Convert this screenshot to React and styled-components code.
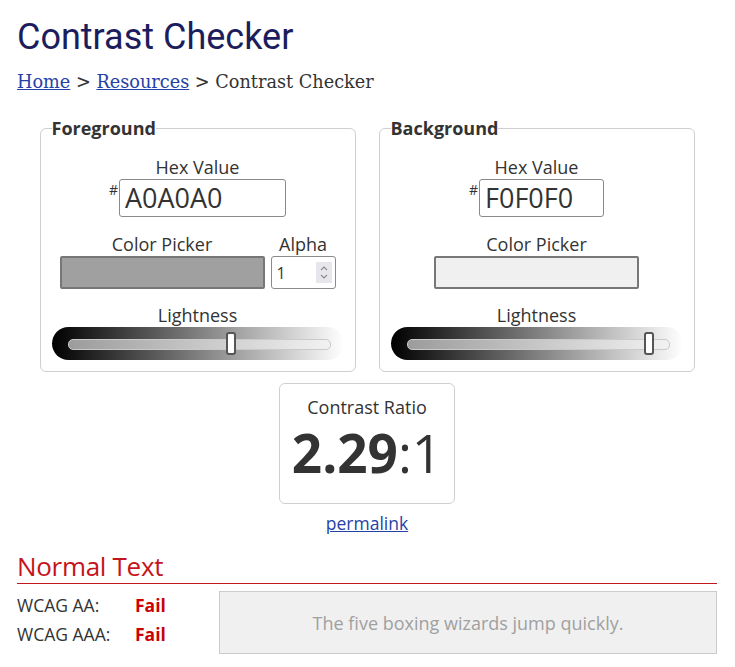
import React from "react";
import styled, { createGlobalStyle } from "styled-components";

const GlobalStyle = createGlobalStyle`
  body {
    margin: 0;
    background: #fff;
    color: #333;
    font-family: "Open Sans", "DejaVu Sans", sans-serif;
  }
`;

const Page = styled.div`
  width: 700px;
  padding: 0 18px 0 17px;
`;

const Title = styled.h1`
  margin: 16px 0 0;
  font-family: Roboto, "Liberation Sans", sans-serif;
  font-weight: 400;
  font-size: 36px;
  line-height: 42px;
  color: #1c1d5c;
`;

const Breadcrumb = styled.nav`
  margin-top: 12px;
  font-family: "DejaVu Serif", "Liberation Serif", serif;
  font-size: 17.7px;
  line-height: 24px;
  color: #333;

  a {
    color: #2541a8;
    text-decoration: underline;
  }
`;

const Panels = styled.div`
  display: flex;
  justify-content: center;
  gap: 23px;
  margin-top: 22px;
`;

const ColorFieldset = styled.fieldset`
  box-sizing: border-box;
  width: 316px;
  margin: 0;
  padding: 15px 11px 11px;
  border: 1px solid #cfcfcf;
  border-radius: 6px;
  display: flex;
  flex-direction: column;
  align-items: center;
  min-width: 0;
`;

const Legend = styled.legend`
  padding: 0;
  font-size: 18px;
  font-weight: 700;
  line-height: 24px;
  color: #333;
`;

const FieldLabel = styled.div`
  font-size: 18px;
  line-height: 24px;
  color: #333;
  text-align: center;
  margin-top: ${(p) => p.$top || 0}px;
`;

const HexRow = styled.div`
  display: flex;
  align-items: flex-start;
`;

const Hash = styled.span`
  font-size: 14px;
  line-height: 14px;
  margin-top: 4px;
  margin-right: 1px;
`;

const HexInput = styled.div`
  box-sizing: border-box;
  width: ${(p) => p.$width}px;
  height: 38px;
  border: 1px solid #8a8a8a;
  border-radius: 3px;
  padding: 0 5px;
  font-size: 27px;
  line-height: 36px;
  color: #333;
`;

const PickerRow = styled.div`
  display: flex;
  gap: 6px;
  align-items: flex-end;
  margin-top: 15px;
`;

const PickerCol = styled.div`
  display: flex;
  flex-direction: column;
  align-items: center;
`;

const Swatch = styled.div`
  box-sizing: border-box;
  width: 205px;
  height: 33px;
  background: ${(p) => p.$color};
  border: 2px solid #777;
  border-radius: 2px;
`;

const AlphaBox = styled.div`
  box-sizing: border-box;
  width: 65px;
  height: 33px;
  border: 1px solid #8a8a8a;
  border-radius: 3px;
  display: flex;
  align-items: center;
  justify-content: space-between;
  padding: 0 3px 0 5px;
  font-size: 16px;
`;

const Spinner = styled.span`
  width: 16px;
  height: 21px;
  background: #e6e6ec;
  display: flex;
  align-items: center;
  justify-content: center;
`;

const Slider = styled.div`
  box-sizing: border-box;
  width: 292px;
  height: 33px;
  padding: 0 13px 0 16px;
  display: flex;
  align-items: center;
  border-radius: 17px;
  background: linear-gradient(to right, #000 0%, #fff 100%);
`;

const Track = styled.div`
  position: relative;
  flex: 1;
  height: 9px;
  margin-top: 2px;
  border: 1px solid #c9c9c9;
  border-radius: 5px;
  background: linear-gradient(to right, #9c9c9c, #f2f2f2);
`;

const Thumb = styled.div`
  position: absolute;
  top: -8px;
  box-sizing: border-box;
  width: 10px;
  height: 23px;
  background: #fff;
  border: 2px solid #555;
  border-radius: 3px;
`;

const RatioBox = styled.div`
  box-sizing: border-box;
  width: 176px;
  height: 121px;
  margin: 11px auto 0;
  border: 1px solid #cfcfcf;
  border-radius: 6px;
  display: flex;
  flex-direction: column;
  align-items: center;
  padding-top: 11px;
`;

const RatioLabel = styled.div`
  font-size: 18px;
  line-height: 24px;
`;

const RatioValue = styled.div`
  font-size: 53px;
  line-height: 62px;
  margin-top: 3px;
  color: #333;

  b {
    font-weight: 700;
  }
`;

const Permalink = styled.a`
  display: block;
  width: max-content;
  margin: 7px auto 0;
  font-size: 17.5px;
  line-height: 24px;
  color: #2541a8;
  text-decoration: underline;
`;

const SectionHeading = styled.h2`
  margin: 15px 0 0;
  padding-bottom: 1px;
  border-bottom: 1px solid #c4141c;
  font-size: 26px;
  font-weight: 400;
  line-height: 32px;
  color: #c4141c;
  letter-spacing: -0.3px;
`;

const ResultRow = styled.div`
  display: flex;
  margin-top: 7px;
`;

const Results = styled.div`
  width: 202px;
`;

const ResultLine = styled.div`
  display: flex;
  font-size: 17.5px;
  line-height: 29px;
`;

const Level = styled.span`
  width: 118px;
`;

const Verdict = styled.span`
  font-weight: 700;
  color: #cc0000;
`;

const Sample = styled.div`
  box-sizing: border-box;
  flex: 1;
  height: 63px;
  background: ${(p) => p.$bg};
  color: ${(p) => p.$fg};
  border: 1px solid #ccc;
  display: flex;
  align-items: center;
  justify-content: center;
  font-size: 18px;
`;

const panels = [
  { name: "Foreground", hex: "A0A0A0", inputWidth: 167, alpha: true },
  { name: "Background", hex: "F0F0F0", inputWidth: 125, alpha: false },
];

function lightness(hex) {
  const v = [0, 2, 4].map((i) => parseInt(hex.slice(i, i + 2), 16) / 255);
  return (Math.max(...v) + Math.min(...v)) / 2;
}

function ColorPanel({ panel }) {
  const l = lightness(panel.hex);
  return (
    <ColorFieldset>
      <Legend>{panel.name}</Legend>
      <FieldLabel>Hex Value</FieldLabel>
      <HexRow>
        <Hash>#</Hash>
        <HexInput $width={panel.inputWidth}>{panel.hex}</HexInput>
      </HexRow>
      <PickerRow>
        <PickerCol>
          <FieldLabel>Color Picker</FieldLabel>
          <Swatch $color={"#" + panel.hex} />
        </PickerCol>
        {panel.alpha && (
          <PickerCol>
            <FieldLabel>Alpha</FieldLabel>
            <AlphaBox>
              1
              <Spinner>
                <svg width="10" height="17" viewBox="0 0 10 17" fill="none" stroke="#8a8a8a" strokeWidth="1.1">
                  <path d="M2 6 L5 3 L8 6" />
                  <path d="M2 11 L5 14 L8 11" />
                </svg>
              </Spinner>
            </AlphaBox>
          </PickerCol>
        )}
      </PickerRow>
      <FieldLabel $top={14}>Lightness</FieldLabel>
      <Slider>
        <Track>
          <Thumb style={{ left: `calc(${l} * (100% - 10px))` }} />
        </Track>
      </Slider>
    </ColorFieldset>
  );
}

export default function App() {
  return (
    <>
      <GlobalStyle />
      <Page>
        <Title>Contrast Checker</Title>
        <Breadcrumb>
          <a href="#">Home</a> &gt; <a href="#">Resources</a> &gt; Contrast Checker
        </Breadcrumb>
        <Panels>
          {panels.map((p) => (
            <ColorPanel key={p.name} panel={p} />
          ))}
        </Panels>
        <RatioBox>
          <RatioLabel>Contrast Ratio</RatioLabel>
          <RatioValue>
            <b>2.29</b>:1
          </RatioValue>
        </RatioBox>
        <Permalink href="#">permalink</Permalink>
        <SectionHeading>Normal Text</SectionHeading>
        <ResultRow>
          <Results>
            <ResultLine>
              <Level>WCAG AA:</Level>
              <Verdict>Fail</Verdict>
            </ResultLine>
            <ResultLine>
              <Level>WCAG AAA:</Level>
              <Verdict>Fail</Verdict>
            </ResultLine>
          </Results>
          <Sample $bg="#f0f0f0" $fg="#a0a0a0">
            The five boxing wizards jump quickly.
          </Sample>
        </ResultRow>
      </Page>
    </>
  );
}
